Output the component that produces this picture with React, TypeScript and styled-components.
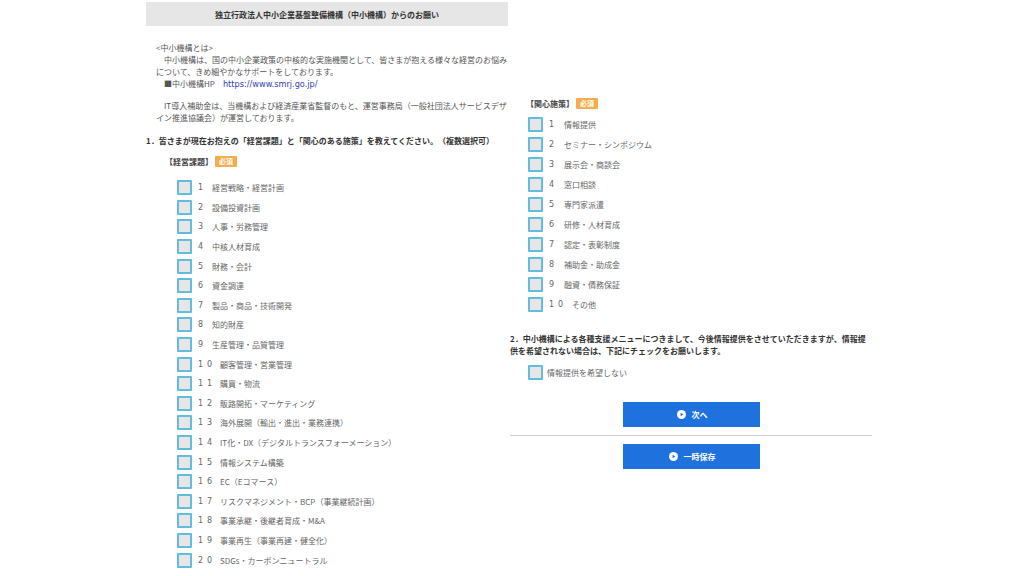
import React from "react";
import styled, { createGlobalStyle } from "styled-components";

const Global = createGlobalStyle`
  html, body { margin: 0; padding: 0; background: #fff; }
  body {
    font-family: "Noto Sans CJK JP", "Noto Sans", sans-serif;
    font-size: 8px;
    color: #555;
  }
`;

const Page = styled.div`
  width: 1024px;
  height: 576px;
  overflow: hidden;
  display: grid;
  grid-template-columns: 364px 362px;
  padding-left: 146px;
  box-sizing: border-box;
`;

const LeftCol = styled.div`
  padding-top: 2px;
  display: flex;
  flex-direction: column;
`;

const RightCol = styled.div`
  padding-top: 97px;
  display: flex;
  flex-direction: column;
`;

const TitleBar = styled.div`
  height: 24px;
  width: 362px;
  background: #e6e6e6;
  display: flex;
  align-items: center;
  justify-content: center;
  font-weight: 700;
  color: #333;
  font-size: 8px;
`;

const Intro = styled.div<{ $mt: number }>`
  margin-top: ${(p) => p.$mt}px;
  padding-left: 10px;
  line-height: 12px;
  white-space: pre;
  color: #555;
`;

const Line = styled.div``;

const Link = styled.span`
  color: #3341b8;
  font-family: "DejaVu Sans", "Noto Sans CJK JP", sans-serif;
  font-size: 8.2px;
`;

const Question = styled.div<{ $mt: number }>`
  margin-top: ${(p) => p.$mt}px;
  line-height: 12px;
  font-weight: 700;
  color: #333;
  white-space: nowrap;
`;

const SubHead = styled.div<{ $mt: number; $pl: number }>`
  margin-top: ${(p) => p.$mt}px;
  padding-left: ${(p) => p.$pl}px;
  height: 12px;
  display: flex;
  align-items: center;
  gap: 2px;
  font-weight: 700;
  color: #444;
`;

const Badge = styled.span`
  display: inline-flex;
  align-items: center;
  justify-content: center;
  width: 22px;
  height: 11px;
  background: #f2ae4c;
  color: #fff;
  font-size: 7px;
  font-weight: 700;
  border-radius: 1px;
`;

const List = styled.div<{ $mt: number; $pl: number }>`
  margin-top: ${(p) => p.$mt}px;
  padding-left: ${(p) => p.$pl}px;
  display: flex;
  flex-direction: column;
`;

const Row = styled.label<{ $h: number }>`
  height: ${(p) => p.$h}px;
  display: flex;
  align-items: center;
  color: #666;
  white-space: nowrap;
`;

const Box = styled.span`
  width: 15px;
  height: 15px;
  box-sizing: border-box;
  border: 2px solid #62bddc;
  background: #e6e6e6;
  border-radius: 1px;
  flex: none;
`;

const Num = styled.span<{ $w: number }>`
  margin-left: 6px;
  width: ${(p) => p.$w}px;
  flex: none;
  font-family: "DejaVu Sans", "Noto Sans CJK JP", sans-serif;
  font-size: 8px;
  letter-spacing: 4px;
`;

const Label = styled.span``;

const CheckLabel = styled.span`
  margin-left: 4px;
  color: #666;
`;

const ButtonArea = styled.div<{ $mt: number }>`
  margin-top: ${(p) => p.$mt}px;
  display: flex;
  justify-content: center;
`;

const Button = styled.button`
  width: 137px;
  height: 25px;
  border: none;
  background: #1f72dd;
  color: #fff;
  font-family: "Noto Sans CJK JP", sans-serif;
  font-size: 8px;
  font-weight: 700;
  display: flex;
  align-items: center;
  justify-content: center;
  gap: 6px;
  padding: 0 0 0 2px;
`;

const Divider = styled.hr`
  margin: 8px 0 0 0;
  border: none;
  height: 1px;
  background: #cfcfcf;
  width: 362px;
`;

const PlayIcon = () => (
  <svg width="9" height="9" viewBox="0 0 10 10">
    <circle cx="5" cy="5" r="5" fill="#fff" />
    <path d="M4 3 L7 5 L4 7 Z" fill="#1f72dd" />
  </svg>
);

const issues = [
  "経営戦略・経営計画",
  "設備投資計画",
  "人事・労務管理",
  "中核人材育成",
  "財務・会計",
  "資金調達",
  "製品・商品・技術開発",
  "知的財産",
  "生産管理・品質管理",
  "顧客管理・営業管理",
  "購買・物流",
  "販路開拓・マーケティング",
  "海外展開（輸出・進出・業務連携）",
  "IT化・DX（デジタルトランスフォーメーション）",
  "情報システム構築",
  "EC（Eコマース）",
  "リスクマネジメント・BCP（事業継続計画）",
  "事業承継・後継者育成・M&A",
  "事業再生（事業再建・健全化）",
  "SDGs・カーボンニュートラル",
];

const measures = [
  "情報提供",
  "セミナー・シンポジウム",
  "展示会・商談会",
  "窓口相談",
  "専門家派遣",
  "研修・人材育成",
  "認定・表彰制度",
  "補助金・助成金",
  "融資・債務保証",
  "その他",
];

export default function App() {
  return (
    <>
      <Global />
      <Page>
        <LeftCol>
          <TitleBar>独立行政法人中小企業基盤整備機構（中小機構）からのお願い</TitleBar>
          <Intro $mt={16}>
            <Line>{"<中小機構とは>"}</Line>
            <Line>{"　中小機構は、国の中小企業政策の中核的な実施機関として、皆さまが抱える様々な経営のお悩み"}</Line>
            <Line>{"について、きめ細やかなサポートをしております。"}</Line>
            <Line>
              {"　■中小機構HP　"}
              <Link>https://www.smrj.go.jp/</Link>
            </Line>
          </Intro>
          <Intro $mt={10}>
            <Line>{"　IT導入補助金は、当機構および経済産業省監督のもと、運営事務局（一般社団法人サービスデザ"}</Line>
            <Line>{"イン推進協議会）が運営しております。"}</Line>
          </Intro>
          <Question $mt={11}>
            1．皆さまが現在お抱えの「経営課題」と「関心のある施策」を教えてください。（複数選択可）
          </Question>
          <SubHead $mt={8} $pl={19}>
            【経営課題】<Badge>必須</Badge>
          </SubHead>
          <List $mt={11} $pl={31}>
            {issues.map((t, i) => (
              <Row key={t} $h={19.6}>
                <Box />
                <Num $w={i < 9 ? 14 : 22}>{i + 1}</Num>
                <Label>{t}</Label>
              </Row>
            ))}
          </List>
        </LeftCol>
        <RightCol>
          <SubHead $mt={0} $pl={16}>
            【関心施策】<Badge>必須</Badge>
          </SubHead>
          <List $mt={5} $pl={18}>
            {measures.map((t, i) => (
              <Row key={t} $h={20}>
                <Box />
                <Num $w={i < 9 ? 15 : 23}>{i + 1}</Num>
                <Label>{t}</Label>
              </Row>
            ))}
          </List>
          <Question $mt={19}>
            2．中小機構による各種支援メニューにつきまして、今後情報提供をさせていただきますが、情報提
            <br />
            供を希望されない場合は、下記にチェックをお願いします。
          </Question>
          <List $mt={5} $pl={18}>
            <Row $h={20}>
              <Box />
              <CheckLabel>情報提供を希望しない</CheckLabel>
            </Row>
          </List>
          <ButtonArea $mt={20}>
            <Button>
              <PlayIcon />
              次へ
            </Button>
          </ButtonArea>
          <Divider />
          <ButtonArea $mt={8}>
            <Button>
              <PlayIcon />
              一時保存
            </Button>
          </ButtonArea>
        </RightCol>
      </Page>
    </>
  );
}
